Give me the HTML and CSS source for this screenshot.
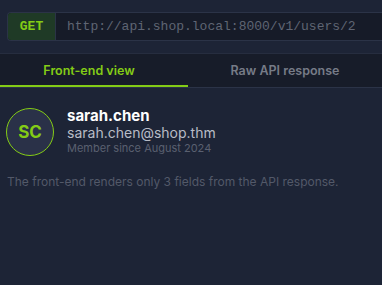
FILE: index.html
```html
<!DOCTYPE html>
<html>
<head>
<meta charset="utf-8">
<link rel="stylesheet" href="styles.css">
</head>
<body>
<div class="page">
  <div class="urlbar">
    <span class="method">GET</span>
    <span class="url">http://api.shop.local:8000/v1/users/2</span>
  </div>
  <div class="tabs">
    <div class="tab active">Front-end view</div>
    <div class="tab">Raw API response</div>
  </div>
  <div class="content">
    <div class="profile">
      <div class="avatar">SC</div>
      <div class="info">
        <div class="name">sarah.chen</div>
        <div class="email">sarah.chen@shop.thm</div>
        <div class="since">Member since August 2024</div>
      </div>
    </div>
    <p class="note">The front-end renders only 3 fields from the API response.</p>
  </div>
</div>
</body>
</html>
```
FILE: styles.css
```css
html, body {
  margin: 0;
  padding: 0;
  background: #1d2436;
  font-family: Inter, "Noto Sans", sans-serif;
  overflow: hidden;
}
.page {
  width: 382px;
  height: 285px;
}
.urlbar {
  display: flex;
  margin: 12px 0 0 7px;
  height: 27px;
  border: 1px solid #2b3347;
  border-right: none;
  border-radius: 4px 0 0 4px;
  overflow: hidden;
  background: #161b28;
}
.method {
  display: flex;
  align-items: center;
  justify-content: center;
  width: 47px;
  background: #1f3a26;
  color: #84cc16;
  font-family: "Liberation Mono", monospace;
  font-weight: 700;
  font-size: 13px;
  border-right: 1px solid #2b3347;
}
.url {
  display: flex;
  align-items: center;
  padding-left: 11px;
  color: #5f6573;
  font-family: "Liberation Mono", monospace;
  font-size: 13px;
  white-space: nowrap;
}
.tabs {
  display: grid;
  grid-template-columns: 188px 1fr;
  margin-top: 12px;
  background: #171c29;
  border-top: 1px solid #262d3f;
  border-bottom: 1px solid #2b3347;
  height: 33px;
}
.tab {
  display: flex;
  align-items: center;
  justify-content: center;
  font-size: 12.5px;
  font-weight: 600;
  color: #767b87;
  border-bottom: 2px solid transparent;
  padding-top: 1px;
}
.tab.active {
  color: #84cc16;
  border-bottom-color: #84cc16;
  padding-right: 10px;
}
.content {
  padding: 20px 7px 0 6px;
}
.profile {
  display: flex;
  align-items: center;
  gap: 13px;
}
.avatar {
  width: 46px;
  height: 46px;
  border-radius: 50%;
  border: 1px solid #84cc16;
  background: #2a3148;
  color: #84cc16;
  font-weight: 700;
  font-size: 17px;
  display: flex;
  align-items: center;
  justify-content: center;
}
.info {
  display: flex;
  flex-direction: column;
  margin-top: -2px;
}
.name {
  color: #ffffff;
  font-weight: 700;
  font-size: 15px;
  line-height: 18px;
}
.email {
  color: #b8bcc6;
  font-size: 14px;
  line-height: 16px;
}
.since {
  color: #5a6070;
  font-size: 11px;
  line-height: 15px;
}
.note {
  margin: 18px 0 0 1px;
  color: #535969;
  font-size: 12px;
}
```
